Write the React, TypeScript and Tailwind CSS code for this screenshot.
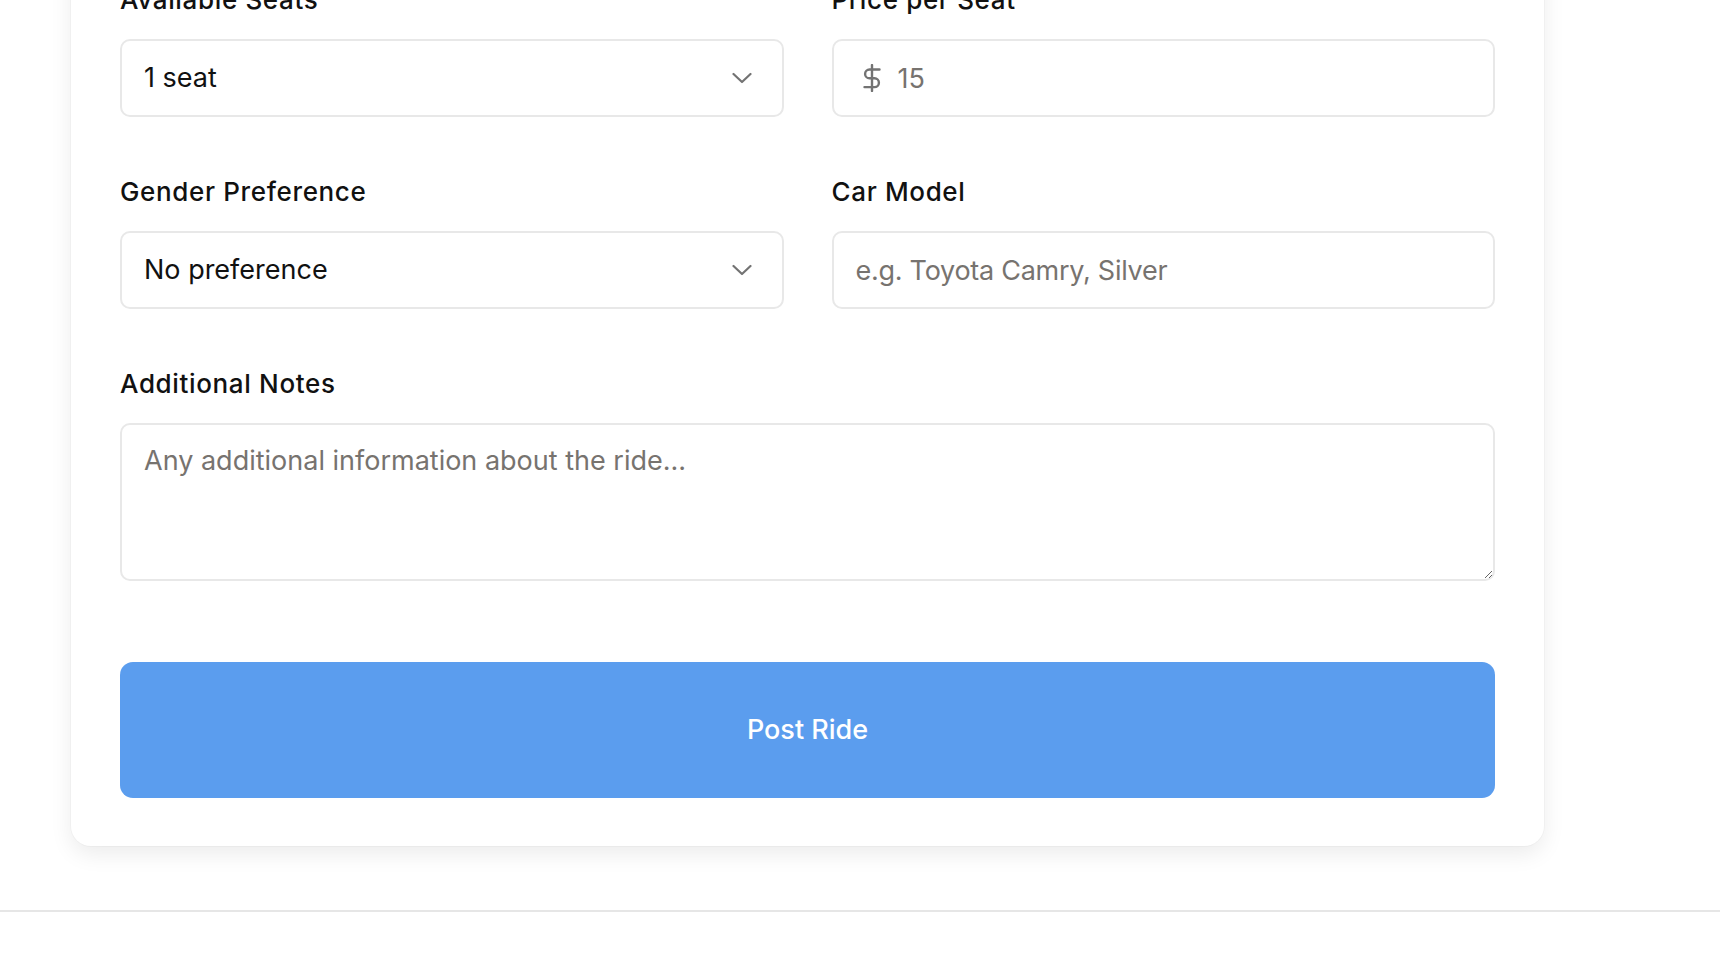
import React, { useState } from 'react';

const Chevron = () => (
  <svg width="20" height="11" viewBox="0 0 20 11" fill="none" className="pointer-events-none absolute right-[32px] top-1/2 -translate-y-1/2">
    <polyline points="1.5,1.5 10,9.5 18.5,1.5" stroke="#737373" strokeWidth="2.2" strokeLinecap="round" strokeLinejoin="round" />
  </svg>
);

const Dollar = () => (
  <svg width="20" height="28" viewBox="0 0 20 28" fill="none" className="pointer-events-none absolute left-[30px] top-1/2 -translate-y-1/2">
    <line x1="10" y1="1" x2="10" y2="27" stroke="#737373" strokeWidth="2.4" strokeLinecap="round" />
    <path d="M17.5 5.5H7.5a4.4 4.4 0 0 0 0 8.8h5a4.4 4.4 0 0 1 0 8.8H2.5" stroke="#737373" strokeWidth="2.4" strokeLinecap="round" strokeLinejoin="round" />
  </svg>
);

function Field({ label, children, className = '' }: { label: string; children: React.ReactNode; className?: string }) {
  return (
    <div className={className}>
      <label className="block text-[26px] leading-[38px] font-medium tracking-[0.025em] text-[#111111] mb-5">{label}</label>
      {children}
    </div>
  );
}

const boxClass =
  'w-full h-[78px] rounded-[10px] border-2 border-[#e8e8e8] bg-white text-[27px] text-[#111111] outline-none placeholder:text-[#77736f]';

function App() {
  const [seats, setSeats] = useState('1');
  const [gender, setGender] = useState('none');
  const [price, setPrice] = useState('');
  const [carModel, setCarModel] = useState('');
  const [notes, setNotes] = useState('');

  return (
    <div className="min-h-screen bg-white overflow-hidden" style={{ fontFamily: 'Inter, "Noto Sans", sans-serif' }}>
      <div className="pl-[71px]">
        <div className="w-[1473px] -mt-[67px] px-[49px] pt-12 pb-12 bg-white rounded-[20px] shadow-[0_0_0_1px_rgba(0,0,0,0.025),0_8px_22px_rgba(0,0,0,0.08)]">
          <div className="grid grid-cols-2 gap-x-12 gap-y-[56px]">
            <Field label="Available Seats">
              <div className="relative">
                <select
                  value={seats}
                  onChange={(e) => setSeats(e.target.value)}
                  className={`${boxClass} appearance-none pl-[22px] pr-16`}
                >
                  <option value="1">1 seat</option>
                  <option value="2">2 seats</option>
                  <option value="3">3 seats</option>
                  <option value="4">4 seats</option>
                </select>
                <Chevron />
              </div>
            </Field>

            <Field label="Price per Seat">
              <div className="relative">
                <Dollar />
                <input
                  type="number"
                  value={price}
                  onChange={(e) => setPrice(e.target.value)}
                  placeholder="15"
                  className={`${boxClass} pl-[64px] pr-6`}
                />
              </div>
            </Field>

            <Field label="Gender Preference">
              <div className="relative">
                <select
                  value={gender}
                  onChange={(e) => setGender(e.target.value)}
                  className={`${boxClass} appearance-none pl-[22px] pr-16`}
                >
                  <option value="none">No preference</option>
                  <option value="female">Female only</option>
                  <option value="male">Male only</option>
                </select>
                <Chevron />
              </div>
            </Field>

            <Field label="Car Model">
              <input
                type="text"
                value={carModel}
                onChange={(e) => setCarModel(e.target.value)}
                placeholder="e.g. Toyota Camry, Silver"
                className={`${boxClass} px-[22px] tracking-[-0.01em]`}
              />
            </Field>

            <Field label="Additional Notes" className="col-span-2">
              <textarea
                value={notes}
                onChange={(e) => setNotes(e.target.value)}
                placeholder="Any additional information about the ride..."
                className="block w-full h-[158px] rounded-[10px] border-2 border-[#e8e8e8] bg-white px-[22px] pt-[16px] text-[27px] leading-[40px] text-[#111111] outline-none placeholder:text-[#77736f]"
              />
            </Field>
          </div>

          <button className="mt-[81px] w-full h-[136px] rounded-[13px] bg-[#5b9dee] text-white text-[27px] font-medium">
            Post Ride
          </button>
        </div>
      </div>

      <footer className="mt-[64px] border-t-2 border-[#e6e6e6] h-[80px] bg-white" />
    </div>
  );
}

export default App;
